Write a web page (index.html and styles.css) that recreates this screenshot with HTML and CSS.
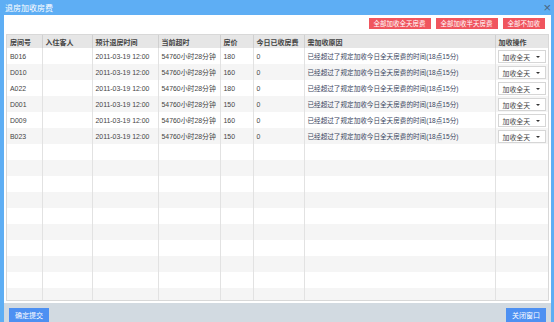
FILE: index.html
```html
<!DOCTYPE html>
<html lang="zh-CN">
<head>
    <meta charset="UTF-8">
    <title>退房加收房费</title>
    <link rel="stylesheet" href="styles.css">
</head>
<body>
    <div class="window">
        <div class="titlebar">
            <span>退房加收房费</span>
            <span class="close">&times;</span>
        </div>
        <div class="main">
            <div class="toolbar">
                <button class="btn red">全部加收全天房费</button>
                <button class="btn red">全部加收半天房费</button>
                <button class="btn red">全部不加收</button>
            </div>
            <div class="grid">
                <table>
                    <colgroup>
                        <col style="width:35px"><col style="width:50px"><col style="width:66px"><col style="width:62px">
                        <col style="width:33px"><col style="width:51px"><col style="width:191px"><col>
                    </colgroup>
                    <thead>
                        <tr><th>房间号</th><th>入住客人</th><th>预计退房时间</th><th>当前超时</th><th>房价</th><th>今日已收房费</th><th>需加收原因</th><th>加收操作</th></tr>
                    </thead>
                    <tbody id="rows"></tbody>
                </table>
            </div>
        </div>
        <div class="footer">
            <button class="btn blue">确定提交</button>
            <button class="btn blue">关闭窗口</button>
        </div>
    </div>
<script>
    const rooms = [
        ['B016', '180'], ['D010', '160'], ['A022', '180'],
        ['D001', '150'], ['D009', '160'], ['B023', '150']
    ];
    const tbody = document.getElementById('rows');
    for (let i = 0; i < 16; i++) {
        const tr = document.createElement('tr');
        const r = rooms[i];
        if (r) {
            tr.innerHTML = '<td>' + r[0] + '</td><td></td><td>2011-03-19 12:00</td><td>54760小时28分钟</td><td>' + r[1] +
                '</td><td>0</td><td class="reason">已经超过了规定加收今日全天房费的时间(18点15分)</td>' +
                '<td><div class="pick">加收全天<span class="arrow"></span></div></td>';
        } else {
            tr.innerHTML = '<td></td><td></td><td></td><td></td><td></td><td></td><td></td><td></td>';
        }
        tbody.appendChild(tr);
    }
</script>
</body>
</html>
```

FILE: styles.css
```css
body {
    margin: 0;
    padding: 0;
    background-color: #5eaef4;
    font-family: "Liberation Sans", "Noto Sans CJK SC", sans-serif;
    color: #333;
}
.window {
    width: 554px;
    height: 322px;
    overflow: hidden;
}
.titlebar {
    height: 15px;
    display: flex;
    justify-content: space-between;
    align-items: center;
    padding: 0 3px 0 5px;
    color: #fff;
    font-size: 8px;
}
.titlebar .close {
    font-size: 13px;
    line-height: 10px;
    color: #4a6580;
}
.main {
    margin: 0 3px 0 4px;
    background-color: #fff;
    padding: 3px 2px 2px 2px;
}
.toolbar {
    display: flex;
    justify-content: flex-end;
    gap: 5px;
    padding-right: 4px;
    height: 11px;
    margin-bottom: 5px;
}
.btn {
    border: none;
    margin: 0;
    padding: 0 5px;
    height: 11px;
    line-height: 11px;
    font-family: inherit;
    font-size: 6.5px;
    color: #fff;
    cursor: pointer;
}
.btn.red {
    background-color: #f0555e;
}
.btn.blue {
    background-color: #4d90f2;
    height: 14px;
    font-size: 7px;
    padding: 0 6px;
    width: 40px;
}
.grid {
    height: 265px;
    overflow: hidden;
    border: 1px solid #d8d8d8;
}
table {
    width: 100%;
    border-collapse: collapse;
    table-layout: fixed;
}
th {
    height: 13px;
    padding: 0 3px;
    background-color: #e6e6e6;
    font-size: 7px;
    font-weight: bold;
    text-align: left;
    color: #444;
    border-left: 1px solid #d0d0d0;
    white-space: nowrap;
    overflow: hidden;
}
td {
    height: 16px;
    padding: 0 3px;
    font-size: 6.9px;
    color: #444;
    border-left: 1px solid #e2e2e2;
    white-space: nowrap;
    overflow: hidden;
}
th:first-child, td:first-child {
    border-left: none;
}
tbody tr:nth-child(even) td {
    background-color: #f5f5f5;
}
.reason {
    color: #3a4660;
    font-size: 6.6px;
}
.pick {
    position: relative;
    height: 13px;
    line-height: 13px;
    width: 48px;
    border: 1px solid #d6d6d6;
    background: #fff;
    box-sizing: border-box;
    padding-left: 4px;
    margin-left: -1px;
}
.arrow {
    position: absolute;
    right: 5px;
    top: 5px;
    border-left: 2px solid transparent;
    border-right: 2px solid transparent;
    border-top: 2px solid #333;
}
.footer {
    margin: 0 3px 0 4px;
    height: 19px;
    background-color: #d2dae1;
    display: flex;
    justify-content: space-between;
    align-items: flex-start;
    padding: 5px 5px 0 5px;
    box-sizing: border-box;
}
```
